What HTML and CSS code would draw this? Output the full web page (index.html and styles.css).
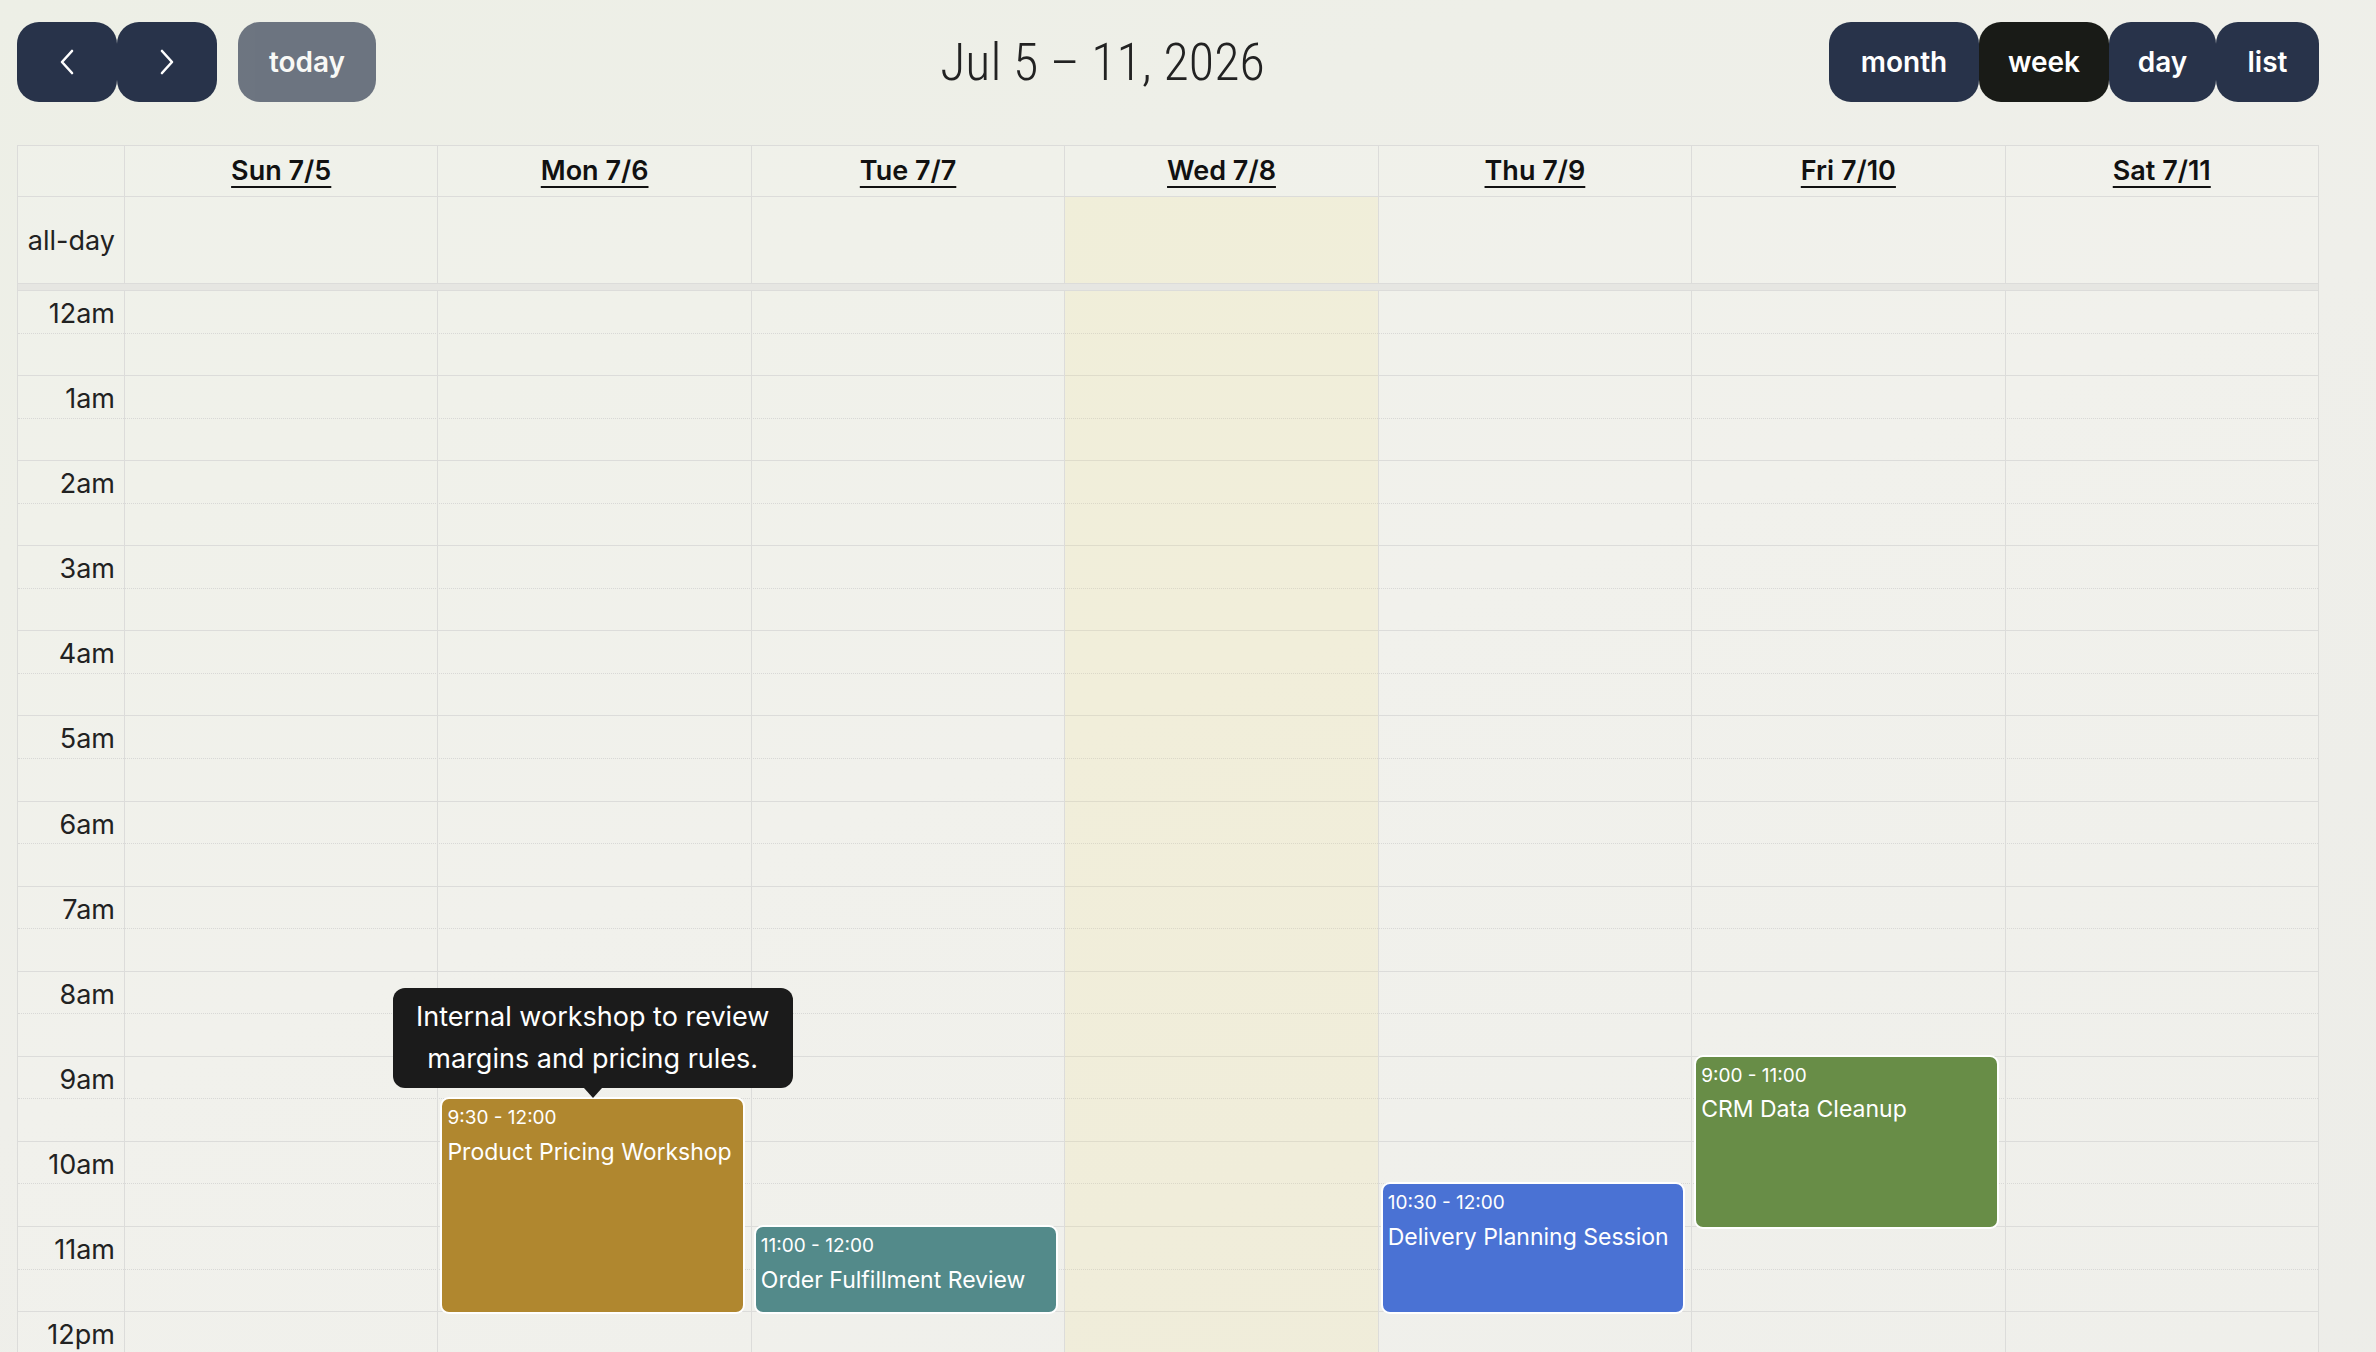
FILE: index.html
```html
<!DOCTYPE html>
<html lang="en">
<head>
  <meta charset="UTF-8" />
  <meta name="viewport" content="width=device-width, initial-scale=1" />
  <title>Team Calendar</title>
  <link rel="stylesheet" href="styles.css">
</head>
<body>
  <div class="calendar">

    <!-- Toolbar: navigation, title, view switcher -->
    <div class="toolbar">
      <div class="chunk">
        <div class="btn-group">
          <button class="btn btn-icon" title="Previous week">
            <svg width="16" height="26" viewBox="0 0 16 26"><polyline points="13,2 3,13 13,24" /></svg>
          </button>
          <button class="btn btn-icon" title="Next week">
            <svg width="16" height="26" viewBox="0 0 16 26"><polyline points="3,2 13,13 3,24" /></svg>
          </button>
        </div>
        <button class="btn btn-today" disabled>today</button>
      </div>
      <h2 class="title">Jul 5 – 11, 2026</h2>
      <div class="btn-group">
        <button class="btn btn-month">month</button>
        <button class="btn btn-week active">week</button>
        <button class="btn btn-day">day</button>
        <button class="btn btn-list">list</button>
      </div>
    </div>

    <div class="grid">
      <!-- Day headers -->
      <div class="row head">
        <div class="axis"></div>
        <div class="cell"><a href="#">Sun 7/5</a></div>
        <div class="cell"><a href="#">Mon 7/6</a></div>
        <div class="cell"><a href="#">Tue 7/7</a></div>
        <div class="cell"><a href="#">Wed 7/8</a></div>
        <div class="cell"><a href="#">Thu 7/9</a></div>
        <div class="cell"><a href="#">Fri 7/10</a></div>
        <div class="cell"><a href="#">Sat 7/11</a></div>
      </div>

      <!-- All-day row -->
      <div class="row allday">
        <div class="axis">all-day</div>
        <div class="cell"></div>
        <div class="cell"></div>
        <div class="cell"></div>
        <div class="cell today"></div>
        <div class="cell"></div>
        <div class="cell"></div>
        <div class="cell"></div>
      </div>

      <div class="divider"></div>

      <!-- Time slots -->
      <div class="body">
        <div class="slots">
          <div class="slot"><div class="label">12am</div></div><div class="slot half"></div>
          <div class="slot"><div class="label">1am</div></div><div class="slot half"></div>
          <div class="slot"><div class="label">2am</div></div><div class="slot half"></div>
          <div class="slot"><div class="label">3am</div></div><div class="slot half"></div>
          <div class="slot"><div class="label">4am</div></div><div class="slot half"></div>
          <div class="slot"><div class="label">5am</div></div><div class="slot half"></div>
          <div class="slot"><div class="label">6am</div></div><div class="slot half"></div>
          <div class="slot"><div class="label">7am</div></div><div class="slot half"></div>
          <div class="slot"><div class="label">8am</div></div><div class="slot half"></div>
          <div class="slot"><div class="label">9am</div></div><div class="slot half"></div>
          <div class="slot"><div class="label">10am</div></div><div class="slot half"></div>
          <div class="slot"><div class="label">11am</div></div><div class="slot half"></div>
          <div class="slot"><div class="label">12pm</div></div><div class="slot half"></div>
          <div class="slot"><div class="label">1pm</div></div><div class="slot half"></div>
          <div class="slot"><div class="label">2pm</div></div><div class="slot half"></div>
          <div class="slot"><div class="label">3pm</div></div><div class="slot half"></div>
          <div class="slot"><div class="label">4pm</div></div><div class="slot half"></div>
          <div class="slot"><div class="label">5pm</div></div><div class="slot half"></div>
          <div class="slot"><div class="label">6pm</div></div><div class="slot half"></div>
          <div class="slot"><div class="label">7pm</div></div><div class="slot half"></div>
          <div class="slot"><div class="label">8pm</div></div><div class="slot half"></div>
          <div class="slot"><div class="label">9pm</div></div><div class="slot half"></div>
          <div class="slot"><div class="label">10pm</div></div><div class="slot half"></div>
          <div class="slot"><div class="label">11pm</div></div><div class="slot half"></div>
        </div>

        <!-- Day columns with events (top/height = start/duration over 24h) -->
        <div class="cols">
          <div class="col"></div>
          <div class="col">
            <div class="event ev-gold" style="top: 39.583%; height: 10.417%;">
              <div class="tip">Internal workshop to review margins and pricing rules.</div>
              <div class="ev-time">9:30 - 12:00</div>
              <div class="ev-title">Product Pricing Workshop</div>
            </div>
          </div>
          <div class="col">
            <div class="event ev-teal" style="top: 45.833%; height: 4.167%;">
              <div class="ev-time">11:00 - 12:00</div>
              <div class="ev-title">Order Fulfillment Review</div>
            </div>
          </div>
          <div class="col today"></div>
          <div class="col">
            <div class="event ev-blue" style="top: 43.75%; height: 6.25%;">
              <div class="ev-time">10:30 - 12:00</div>
              <div class="ev-title">Delivery Planning Session</div>
            </div>
          </div>
          <div class="col">
            <div class="event ev-green" style="top: 37.5%; height: 8.333%;">
              <div class="ev-time">9:00 - 11:00</div>
              <div class="ev-title">CRM Data Cleanup</div>
            </div>
          </div>
          <div class="col"></div>
        </div>
      </div>
    </div>

  </div>
</body>
</html>
```

FILE: styles.css
```css
body {
  margin: 0;
  font-family: 'Inter', 'Noto Sans', sans-serif;
  color: #222;
  background: linear-gradient(160deg, #edefe6 0%, #efefea 35%, #ebebe7 100%);
  min-height: 100vh;
}
.calendar {
  width: 2302px;
  margin: 22px 0 0 17px;
}

/* Toolbar */
.toolbar {
  display: flex;
  justify-content: space-between;
  align-items: center;
  margin-bottom: 43px;
}
.chunk {
  display: flex;
  align-items: center;
  gap: 21px;
}
.btn-group {
  display: flex;
}
.btn {
  height: 80px;
  padding: 0;
  border: none;
  border-radius: 22px;
  background-color: #28334a;
  color: #fff;
  font-family: inherit;
  font-size: 28px;
  font-weight: 600;
  cursor: pointer;
}
.btn.active {
  background-color: #191b17;
}
.btn-icon {
  width: 100px;
  display: flex;
  align-items: center;
  justify-content: center;
}
.btn-icon polyline {
  fill: none;
  stroke: #fff;
  stroke-width: 2.6;
  stroke-linecap: round;
  stroke-linejoin: round;
}
.btn-today { width: 138px; }
.btn-month { width: 150px; }
.btn-week { width: 130px; }
.btn-day { width: 107px; }
.btn-list { width: 103px; }
.btn:disabled {
  opacity: 0.65;
  cursor: default;
}
h2.title {
  margin: 0;
  font-family: 'Roboto', sans-serif;
  font-size: 52px;
  font-weight: 350;
  font-stretch: 80%;
  color: #222;
}

/* Grid */
.grid {
  border: 1px solid #dcdcda;
  background-color: rgba(255, 255, 255, 0.12);
}
.row {
  display: grid;
  grid-template-columns: 106px repeat(7, 1fr);
}
.cell {
  border-left: 1px solid #dcdcda;
}
.head {
  height: 50px;
  border-bottom: 1px solid #dcdcda;
}
.head .cell {
  display: flex;
  align-items: center;
  justify-content: center;
}
.head a {
  color: #111;
  font-size: 27px;
  font-weight: 600;
  line-height: 1.5;
  text-decoration: underline;
  text-decoration-thickness: 2px;
  text-underline-offset: 6px;
}
.allday {
  height: 86px;
}
.allday .axis {
  display: flex;
  align-items: center;
  justify-content: flex-end;
  padding-right: 9px;
  padding-top: 3px;
  font-size: 27px;
  line-height: 1.5;
}
.today {
  background-color: rgba(240, 220, 120, 0.15);
}
.divider {
  height: 8px;
  box-sizing: border-box;
  border-top: 1px solid #dcdcda;
  border-bottom: 1px solid #dcdcda;
  background-color: #e6e6e2;
}

/* Time body */
.body {
  position: relative;
}
.slot {
  height: 42.55px;
  box-sizing: border-box;
  border-bottom: 1px dotted #d8d8d6;
}
.slot.half {
  border-bottom: 1px solid #dcdcda;
}
.label {
  width: 106px;
  box-sizing: border-box;
  padding: 3px 9px 0 0;
  text-align: right;
  font-size: 27px;
  line-height: 1.45;
  color: #222;
}
.cols {
  position: absolute;
  top: 0;
  bottom: 0;
  left: 106px;
  right: 0;
  display: grid;
  grid-template-columns: repeat(7, 1fr);
}
.col {
  position: relative;
  border-left: 1px solid #dcdcda;
}

/* Events */
.event {
  position: absolute;
  left: 4px;
  right: 2.5%;
  z-index: 1;
  box-sizing: border-box;
  padding: 5px 5px;
  border-radius: 7px;
  box-shadow: 0 0 0 2px #fff;
  color: #fff;
}
.ev-time {
  font-size: 19px;
  line-height: 1.45;
}
.ev-title {
  margin-top: 3px;
  font-size: 23px;
  line-height: 1.5;
}
.ev-gold { background-color: #b0872f; }
.ev-teal { background-color: #538a8a; }
.ev-blue { background-color: #4a72d4; }
.ev-green { background-color: #688d47; }

/* Description tooltip */
.tip {
  position: absolute;
  left: 50%;
  bottom: calc(100% + 11px);
  transform: translateX(-50%);
  z-index: 2;
  width: 400px;
  box-sizing: border-box;
  padding: 8px 20px;
  border-radius: 12px;
  background-color: #1b1b1b;
  color: #fff;
  font-size: 27px;
  line-height: 42px;
  text-align: center;
}
.tip::after {
  content: '';
  position: absolute;
  top: 100%;
  left: 50%;
  margin-left: -9px;
  border: 9px solid transparent;
  border-top: 10px solid #1b1b1b;
  border-bottom: none;
}
```
